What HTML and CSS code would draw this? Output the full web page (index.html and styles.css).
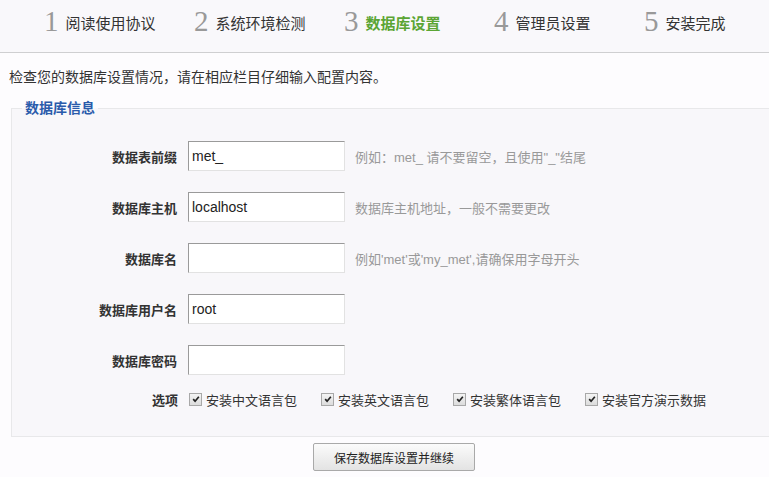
FILE: index.html
```html
<!DOCTYPE html>
<html lang="zh-CN">
<head>
<meta charset="utf-8">
<title>数据库设置</title>
<link rel="stylesheet" href="styles.css">
</head>
<body>
<div class="steps">
  <div class="step"><span class="num">1</span><span class="label">阅读使用协议</span></div>
  <div class="step"><span class="num">2</span><span class="label">系统环境检测</span></div>
  <div class="step current"><span class="num">3</span><span class="label">数据库设置</span></div>
  <div class="step"><span class="num">4</span><span class="label">管理员设置</span></div>
  <div class="step"><span class="num">5</span><span class="label">安装完成</span></div>
</div>
<p class="intro">检查您的数据库设置情况，请在相应栏目仔细输入配置内容。</p>
<fieldset class="box">
  <legend>数据库信息</legend>
  <div class="row"><label class="lbl">数据表前缀</label><input class="field" type="text" value="met_"><span class="hint">例如：met_ 请不要留空，且使用"_"结尾</span></div>
  <div class="row"><label class="lbl">数据库主机</label><input class="field" type="text" value="localhost"><span class="hint">数据库主机地址，一般不需要更改</span></div>
  <div class="row"><label class="lbl">数据库名</label><input class="field" type="text" value=""><span class="hint">例如'met'或'my_met',请确保用字母开头</span></div>
  <div class="row"><label class="lbl">数据库用户名</label><input class="field" type="text" value="root"></div>
  <div class="row"><label class="lbl">数据库密码</label><input class="field" type="password" value=""></div>
  <div class="opts">
    <span class="lbl">选项</span>
    <span class="opt"><span class="cb"><svg viewBox="0 0 12 12" width="12" height="12"><path d="M2.6 6.2 L4.9 8.6 L9.4 3.2" fill="none" stroke="#222" stroke-width="2"/></svg></span>安装中文语言包</span>
    <span class="opt"><span class="cb"><svg viewBox="0 0 12 12" width="12" height="12"><path d="M2.6 6.2 L4.9 8.6 L9.4 3.2" fill="none" stroke="#222" stroke-width="2"/></svg></span>安装英文语言包</span>
    <span class="opt"><span class="cb"><svg viewBox="0 0 12 12" width="12" height="12"><path d="M2.6 6.2 L4.9 8.6 L9.4 3.2" fill="none" stroke="#222" stroke-width="2"/></svg></span>安装繁体语言包</span>
    <span class="opt"><span class="cb"><svg viewBox="0 0 12 12" width="12" height="12"><path d="M2.6 6.2 L4.9 8.6 L9.4 3.2" fill="none" stroke="#222" stroke-width="2"/></svg></span>安装官方演示数据</span>
  </div>
</fieldset>
<div class="actions"><button class="btn" type="button">保存数据库设置并继续</button></div>
</body>
</html>
```
FILE: styles.css
```css
html, body {
  margin: 0;
  padding: 0;
  background: #fdfcfe;
  overflow: hidden;
}
body {
  width: 769px;
  height: 477px;
  font-family: "Liberation Sans", "Noto Sans CJK SC", Arial, sans-serif;
  font-size: 13px;
  color: #333;
}
.steps {
  display: flex;
  height: 53px;
  box-sizing: border-box;
  padding: 0 0 8px 44px;
  background: #f9f8fb;
  border-bottom: 1px solid #cfcfd1;
  align-items: center;
}
.step {
  width: 150px;
  display: flex;
  align-items: center;
  flex: none;
  white-space: nowrap;
}
.step:last-child {
  width: auto;
}
.num {
  font-family: "Liberation Serif", "DejaVu Serif", serif;
  font-size: 29px;
  color: #999;
  line-height: 30px;
  margin-top: -3px;
}
.step .label {
  font-size: 15px;
  color: #333;
  margin-left: 7px;
}
.step.current .label {
  color: #5ba534;
  font-weight: bold;
}
.intro {
  margin: 15px 0 0 9px;
  line-height: 18px;
  font-size: 14px;
}
.box {
  margin: 13px 0 0 11px;
  width: 758px;
  min-width: 0;
  padding: 24px 0 28px 0;
  border: 1px solid #e8e8ea;
  border-right: none;
  background: #f8f7fa;
  box-sizing: border-box;
}
.box legend {
  margin-left: 10px;
  padding: 0 3px;
  color: #2a5bab;
  font-weight: bold;
  font-size: 14px;
  line-height: 18px;
}
.row {
  display: flex;
  align-items: center;
  height: 30px;
  margin-bottom: 21px;
}
.row:nth-of-type(5) {
  margin-bottom: 15px;
}
.lbl {
  width: 165px;
  margin-right: 11px;
  text-align: right;
  font-weight: bold;
  color: #333;
  flex: none;
}
.field {
  width: 157px;
  height: 30px;
  box-sizing: border-box;
  margin: 0;
  padding: 0 3px;
  border: 1px solid;
  border-color: #9a9a9a #e2e2e2 #e2e2e2 #9a9a9a;
  background: #fff;
  font-family: "Liberation Sans", "Noto Sans CJK SC", Arial, sans-serif;
  font-size: 14px;
  color: #222;
  outline: none;
}
.hint {
  margin-left: 10px;
  color: #999;
  font-size: 13px;
}
.opts {
  display: flex;
  align-items: center;
  height: 18px;
}
.opts .lbl {
  width: 166px;
}
.opt {
  width: 132px;
  display: flex;
  align-items: center;
  flex: none;
}
.opt:last-child {
  width: auto;
}
.cb {
  width: 13px;
  height: 13px;
  box-sizing: border-box;
  border: 1px solid #a8a8a8;
  background: linear-gradient(#f4f4f4, #dcdcdc);
  margin-right: 4px;
  display: flex;
  align-items: center;
  justify-content: center;
  flex: none;
}
.cb svg {
  display: block;
  width: 10px;
  height: 10px;
}
.actions {
  padding-left: 313px;
  margin-top: 6px;
}
.btn {
  width: 162px;
  height: 28px;
  border: 1px solid #a9a9a9;
  border-radius: 2px;
  background: linear-gradient(#fbfbfb, #e3e3e3);
  font-family: "Liberation Sans", "Noto Sans CJK SC", Arial, sans-serif;
  font-size: 12px;
  color: #222;
  padding: 0;
}
```
